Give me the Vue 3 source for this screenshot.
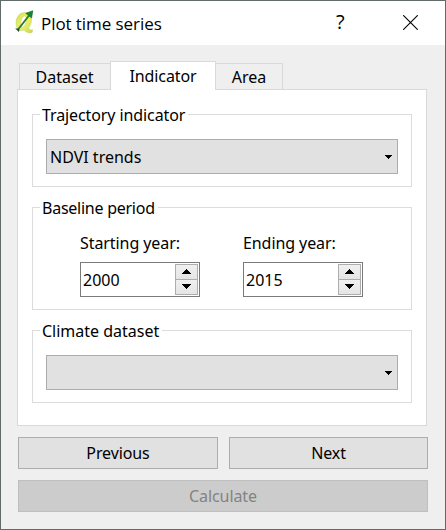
<script setup>
import { ref } from 'vue'

const tabs = [
  { id: 'dataset', label: 'Dataset' },
  { id: 'indicator', label: 'Indicator' },
  { id: 'area', label: 'Area' },
]
const active = ref('indicator')
const years = ref([
  { label: 'Starting year:', value: 2000 },
  { label: 'Ending year:', value: 2015 },
])
</script>

<template>
  <div class="window">
    <header class="titlebar">
      <svg class="logo" width="20" height="24" viewBox="0 0 20 24">
        <defs>
          <linearGradient id="leaf" x1="0" y1="0" x2="1" y2="1">
            <stop offset="0" stop-color="#d3de52" />
            <stop offset="0.5" stop-color="#ecf36a" />
            <stop offset="1" stop-color="#cbd748" />
          </linearGradient>
        </defs>
        <path fill-rule="evenodd" d="M10.500 2.600C5.500 2.600 2 7.500 2 13c0 4.400 2.300 7.600 6 7.600.9 0 1.700-.2 2.400-.5 1.500 2.500 4.500 3.600 7.900 2.100l.2-2.500c-1.700.5-3.200 0-4.100-1.600 2-2.100 3.100-5.100 3.100-8.100 0-4.300-2.600-7.400-7-7.400zM10.500 6c1.600 0 2 1.700 1.700 4.300-.4 3.700-1.700 6.900-3.700 6.900-1.600 0-2-2-1.700-4.500.4-3.700 1.900-6.700 3.700-6.700z" fill="url(#leaf)" stroke="#b9c35a" stroke-width=".4" />
        <path d="M3.700 20L15 5.500" stroke="#2c7a30" stroke-width="1.900" />
        <path d="M18.800 .8L11.800 3.300l5.800 4.700z" fill="#158a28" stroke="#0d601c" stroke-width=".6" />
        <path d="M1.200 18.400l2.800.2 1.700 1.500-1.400 1.900-.8-1.600z" fill="#1d4d25" />
      </svg>
      <h1 class="title">Plot time series</h1>
      <span class="help">?</span>
      <svg class="close" width="15" height="15" viewBox="0 0 15 15">
        <path d="M.2.2l14.600 14.600M14.800.2L.2 14.800" stroke="#000" stroke-width="1.100" />
      </svg>
    </header>

    <main class="body">
      <nav class="tabs">
        <button
          v-for="tab in tabs"
          :key="tab.id"
          :class="['tab', tab.id, { active: active === tab.id }]"
          @click="active = tab.id"
        >{{ tab.label }}</button>
      </nav>

      <section class="pane">
        <div class="group">
          <div class="legend trajectory">Trajectory indicator</div>
          <div class="combo">
            <span>NDVI trends</span>
            <svg width="7" height="4" viewBox="0 0 7 4" shape-rendering="crispEdges"><path d="M0 0h7v1H6v1H5v1H4v1H3V3H2V2H1V1H0z" /></svg>
          </div>
        </div>

        <div class="group period">
          <div class="legend baseline">Baseline period</div>
          <div class="years">
            <div v-for="year in years" :key="year.label" class="year">
              <label>{{ year.label }}</label>
              <div class="spin">
                <span>{{ year.value }}</span>
                <div class="steps">
                  <button class="step" @click="year.value++">
                    <svg width="9" height="5" viewBox="0 0 9 5" shape-rendering="crispEdges"><path d="M4 0h1v1h1v1h1v1h1v1h1v1H0V4h1V3h1V2h1V1h1z" /></svg>
                  </button>
                  <button class="step" @click="year.value--">
                    <svg width="9" height="5" viewBox="0 0 9 5" shape-rendering="crispEdges"><path d="M0 0h9v1H8v1H7v1H6v1H5v1H4V4H3V3H2V2H1V1H0z" /></svg>
                  </button>
                </div>
              </div>
            </div>
          </div>
        </div>

        <div class="group">
          <div class="legend">Climate dataset</div>
          <div class="combo">
            <span></span>
            <svg width="7" height="4" viewBox="0 0 7 4" shape-rendering="crispEdges"><path d="M0 0h7v1H6v1H5v1H4v1H3V3H2V2H1V1H0z" /></svg>
          </div>
        </div>
      </section>

      <footer class="actions">
        <button class="btn">Previous</button>
        <button class="btn">Next</button>
        <button class="btn calculate" disabled>Calculate</button>
      </footer>
    </main>
  </div>
</template>

<style>
body { margin: 0; }
</style>

<style scoped>
.window, .window * { box-sizing: border-box; }
.window {
  width: 446px;
  height: 530px;
  border: 1px solid #626c67;
  background: #efefef;
  color: #000;
  font: 16px/20px "Noto Sans", sans-serif;
  white-space: nowrap;
}
button {
  margin: 0;
  padding: 0;
  font: inherit;
  color: inherit;
  letter-spacing: inherit;
  border-radius: 0;
}
.titlebar {
  display: flex;
  align-items: center;
  height: 44px;
  padding: 0 27px 0 13px;
  background: #fff;
}
.logo { flex: none; margin-top: -2px; }
.title {
  flex: 1;
  margin: 1px 0 0 7px;
  font: 400 17px/24px "Open Sans", sans-serif;
  letter-spacing: -0.07px;
}
.help {
  width: 10px;
  margin: -2px 57px 0 0;
  font: 20px/24px "Open Sans", sans-serif;
}
.close { flex: none; margin-top: -1px; }
.body { padding: 16px 17px 0 16px; }
.tabs {
  display: flex;
  align-items: flex-end;
  height: 29px;
  margin-bottom: -1px;
  padding-left: 2px;
  position: relative;
}
.tab {
  height: 27px;
  border: 1px solid #d9d9d9;
  background: #efefef;
}
.tab.dataset { width: 91px; padding-right: 1px; border-right: 0; }
.tab.indicator { width: 106px; letter-spacing: -0.1px; }
.tab.area { width: 67px; border-left: 0; }
.tab.active {
  height: 29px;
  border-bottom: 0;
  background: #fff;
}
.pane {
  display: flex;
  flex-direction: column;
  gap: 20px;
  width: 410px;
  height: 337px;
  padding: 24px 14px 0;
  border: 1px solid #d9d9d9;
  background: #fff;
}
.group {
  height: 73px;
  padding: 0 13px;
  border: 1px solid #dcdcdc;
}
.period { height: 103px; }
.legend {
  width: max-content;
  height: 20px;
  margin: -10px 0 14px -6px;
  padding: 0 3px 0 2px;
  background: #fff;
}
.trajectory { letter-spacing: -0.1px; }
.baseline { letter-spacing: -0.25px; }
.combo {
  display: flex;
  align-items: center;
  justify-content: space-between;
  height: 35px;
  padding: 0 5px 0 3px;
  border: 1px solid #adadad;
  background: #e1e1e1;
}
.years {
  display: flex;
  gap: 43px;
  padding: 1px 0 0 34px;
}
.year { width: 120px; }
.year label { display: block; height: 29px; letter-spacing: -0.08px; }
.spin {
  display: flex;
  align-items: center;
  justify-content: space-between;
  height: 35px;
  padding: 0 1px 0 2px;
  border: 1px solid #7a7a7a;
}
.steps {
  display: flex;
  flex-direction: column;
  width: 23px;
  height: 31px;
  margin-top: -1px;
  border: 1px solid #adadad;
}
.step {
  display: flex;
  flex: 1;
  align-items: center;
  justify-content: center;
  border: 0;
  background: linear-gradient(#f0f0f0, #e5e5e5);
}
.step + .step { border-top: 1px solid #adadad; }
.actions {
  display: grid;
  grid-template-columns: 200px 199px;
  gap: 11px;
  padding: 11px 0 0 1px;
}
.btn {
  height: 32px;
  border: 1px solid #adadad;
  background: #e1e1e1;
  letter-spacing: -0.1px;
}
.calculate {
  grid-column: span 2;
  border-color: #bfbfbf;
  background: #ccc;
  color: #838383;
}
</style>
